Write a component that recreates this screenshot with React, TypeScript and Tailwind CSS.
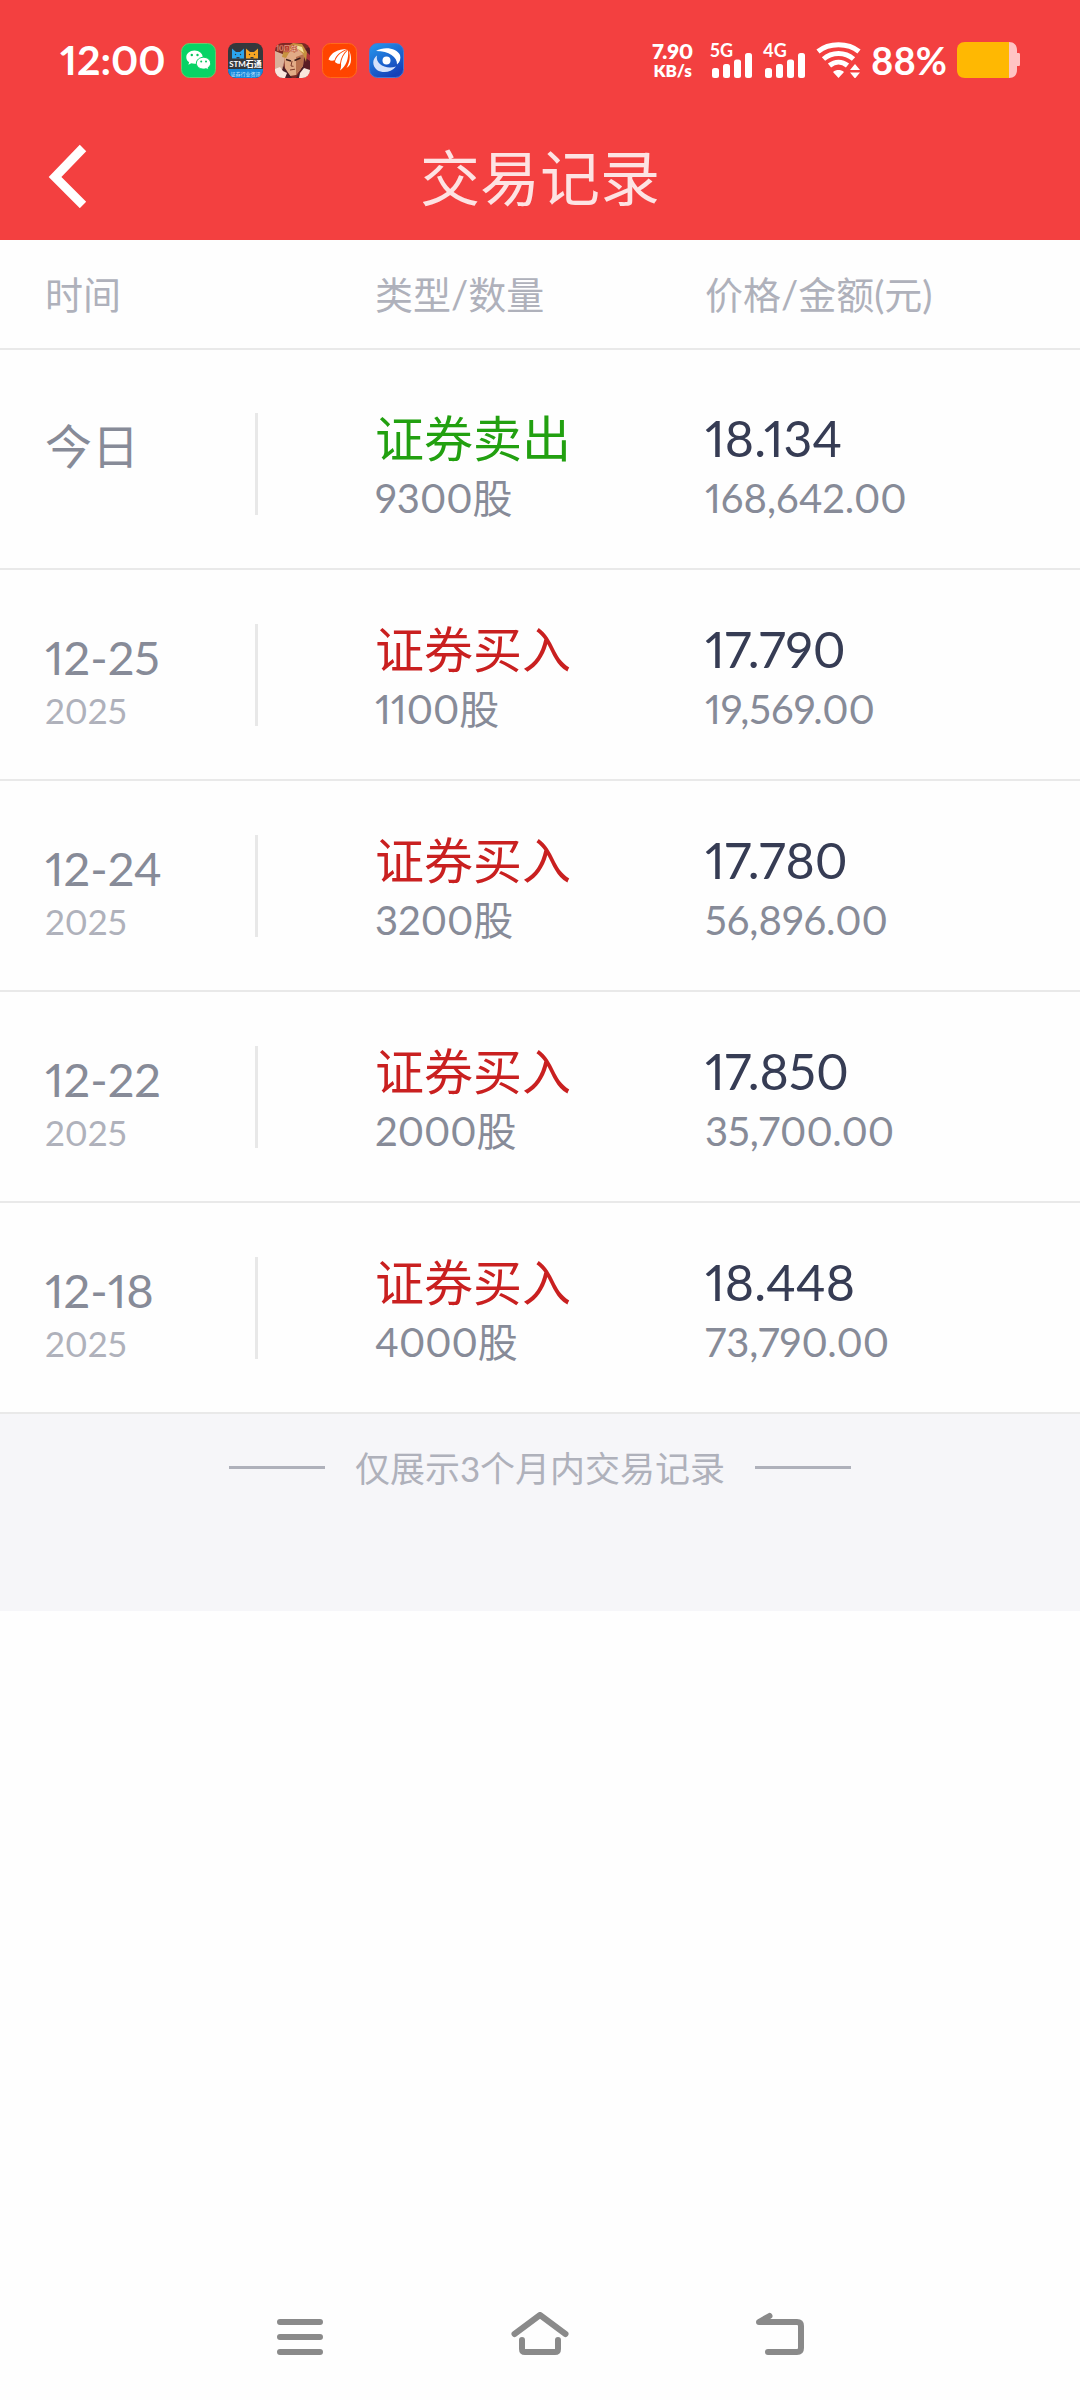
import React from "react";
import clsx from "clsx";

type Trade = {
    date: string;
    year?: string;
    side: "buy" | "sell";
    count: string;
    price: string;
    amount: string;
};

const trades: Trade[] = [
    { date: "今日", side: "sell", count: "9300股", price: "18.134", amount: "168,642.00" },
    { date: "12-25", year: "2025", side: "buy", count: "1100股", price: "17.790", amount: "19,569.00" },
    { date: "12-24", year: "2025", side: "buy", count: "3200股", price: "17.780", amount: "56,896.00" },
    { date: "12-22", year: "2025", side: "buy", count: "2000股", price: "17.850", amount: "35,700.00" },
    { date: "12-18", year: "2025", side: "buy", count: "4000股", price: "18.448", amount: "73,790.00" },
];

const WeChatIcon = () => (
    <svg viewBox="0 0 35 35" className="size-[35px]" aria-hidden="true">
        <rect x="0.5" y="0.5" width="34" height="34" rx="8" fill="#07d365" stroke="#6fc56a" />
        <path d="M13.5 7.5c-4.7 0-8.2 3-8.2 6.7 0 2.1 1.1 3.9 2.8 5.1l-.7 2.5 2.9-1.5c1 .3 2 .5 3.2.5 4.7 0 8.2-2.9 8.2-6.6s-3.5-6.7-8.2-6.7z" fill="#fff" />
        <path d="M22.5 14.3c-4 0-7.1 2.6-7.1 5.9s3.1 5.9 7.1 5.9c.9 0 1.8-.1 2.6-.4l2.5 1.3-.6-2.2c1.6-1.1 2.6-2.7 2.6-4.6 0-3.3-3.1-5.9-7.1-5.9z" fill="#fff" stroke="#07d365" strokeWidth="1" />
        <g fill="#07c45e">
            <circle cx="10.8" cy="12" r="1.2" />
            <circle cx="16.5" cy="12" r="1.2" />
            <circle cx="20.2" cy="18.5" r="1" />
            <circle cx="25" cy="18.5" r="1" />
        </g>
    </svg>
);

const StmIcon = () => (
    <svg viewBox="0 0 35 35" className="size-[35px]" aria-hidden="true">
        <defs>
            <clipPath id="stm-clip">
                <rect width="35" height="35" rx="8" />
            </clipPath>
        </defs>
        <g clipPath="url(#stm-clip)">
            <rect width="35" height="35" fill="#35383c" />
            <rect y="26" width="35" height="9" fill="#1687dc" />
            <path d="M4 5.5l4 3.5h4l4-3.5v10H4z" fill="#2aa5ee" />
            <path d="M18 5.5l4 3.5h4l4-3.5v10H18z" fill="#f7a623" />
            <path d="M8.5 15.5V14h3v1.5zM22.5 15.5V14h3v1.5z" fill="#35383c" />
            <g fill="#35383c">
                <circle cx="7.5" cy="11.5" r="0.7" />
                <circle cx="12.5" cy="11.5" r="0.7" />
                <circle cx="21.5" cy="11.5" r="0.7" />
                <circle cx="26.5" cy="11.5" r="0.7" />
            </g>
            <text x="17.5" y="24" textAnchor="middle" fontSize="8" fontWeight="700" fill="#fff">STM石通</text>
            <text x="17.5" y="32.5" textAnchor="middle" fontSize="5" fill="#d9f0ff">证券行业资讯</text>
        </g>
    </svg>
);

const GameIcon = () => (
    <svg viewBox="0 0 35 35" className="size-[35px]" aria-hidden="true">
        <defs>
            <clipPath id="game-clip">
                <rect width="35" height="35" rx="8" />
            </clipPath>
        </defs>
        <g clipPath="url(#game-clip)">
            <rect width="35" height="35" fill="#7a2a25" />
            <path d="M0 8l10 4-2 14-8 4z" fill="#d9b09a" />
            <path d="M25 8l10-4v22l-9 2z" fill="#5a1c25" />
            <path d="M28 6l7 6v6l-6-4z" fill="#b0323a" />
            <path d="M9 13l3-5 10-4 7 7-1 12-7 9-6 1-5-8z" fill="#e2ab86" />
            <path d="M21 14l8-3-1 12-7 9z" fill="#b9714f" />
            <path d="M7 14l2-8 9-6 9 1 5 8-1 10-3-8-5-5-8 2-4 7z" fill="#c7923f" />
            <path d="M13 8l7-6 7 2 2 6-6-4-7 2z" fill="#f7e2a0" />
            <path d="M11 16.5l5 1.5M19.5 17.5l6-2.5" stroke="#3b1d1a" strokeWidth="1.5" />
            <path d="M17 18l-1 5 2.5.3M15 27l5-.8" stroke="#7d3c2c" strokeWidth="1" fill="none" />
            <path d="M8 23l5 7 4 5H6zM29 22l-5 8-3 5h9z" fill="#47202a" />
            <path d="M0 26l5-2 3 4 4 2-2 5H0zM25 30l4-5 6 2v8H24z" fill="#f9e6de" />
            <text x="1" y="8" fontSize="7" fontWeight="900" fill="#fff0cf" stroke="#b32d20" strokeWidth="0.5">10周年</text>
        </g>
    </svg>
);

const EastMoneyIcon = () => (
    <svg viewBox="0 0 35 35" className="size-[35px]" aria-hidden="true">
        <rect x="0.5" y="0.5" width="34" height="34" rx="8" fill="#ff4400" stroke="#ff6a1c" />
        <g fill="#fff">
            <path d="M25 6C16 6 9 9.5 6.5 16.5c2 1.5 4 1.5 6 .8C14 12.5 18 8.5 25 6z" />
            <path d="M25.5 6.5c-7 3-11.5 7-12.5 12.5 1.5 1.5 3 2 5 1.7C18.5 15 21 10.5 25.5 6.5z" />
            <path d="M26 7c-4.5 4.5-6.5 8.5-7 13.5.3 2.5 0 4.5-1 7C24 23 27 16 26 7z" />
            <path d="M27 7.5c1.5 6.5.8 12-2.5 17.5 3-1.5 4.5-4.5 4.5-8.5 0-3.5-.5-6.5-2-9z" />
        </g>
    </svg>
);

const EyeIcon = () => (
    <svg viewBox="0 0 35 35" className="size-[35px]" aria-hidden="true">
        <defs>
            <linearGradient id="eye-bg" x1="0" y1="0" x2="0.6" y2="1">
                <stop offset="0" stopColor="#2598ee" />
                <stop offset="1" stopColor="#1641b8" />
            </linearGradient>
        </defs>
        <rect x="0.5" y="0.5" width="34" height="34" rx="8" fill="url(#eye-bg)" stroke="#4c77cf" />
        <path d="M7 8C15 3 28 5 31 12c1 3.5 0 7-3 9.5C28.500 14 20 8 7 8z" fill="#fff" />
        <path d="M8 12.500C3 16 3 23 8 27c6 3.500 14 2.500 19-3.500C17 27 6 21 8 12.500z" fill="#d5e2fb" />
        <circle cx="17.5" cy="17.5" r="4" fill="#fff" />
    </svg>
);

const Signal = ({ label }: { label: string }) => (
    <div className="flex w-[42px] flex-col">
        <span className="text-[18px] leading-[16px] font-bold">{label}</span>
        <svg viewBox="0 0 42 25" className="-mt-[5px] h-[25px] w-[42px]" fill="#fff" aria-hidden="true">
            <rect x="2" y="15" width="7" height="10" rx="2.5" />
            <rect x="13" y="11" width="7" height="14" rx="2.5" />
            <rect x="24" y="6.5" width="7" height="18.5" rx="2.5" />
            <rect x="35" y="0" width="7" height="25" rx="2.5" />
        </svg>
    </div>
);

const StatusBar = () => (
    <div className="flex h-[120px] items-center justify-between px-[60px] text-white">
        <div className="flex items-center gap-[12px]">
            <span className="mr-[3px] text-[41px] leading-[48px] font-bold">12:00</span>
            <WeChatIcon />
            <StmIcon />
            <GameIcon />
            <EastMoneyIcon />
            <EyeIcon />
        </div>
        <div className="flex items-center">
            <div className="mr-[17px] flex flex-col items-center font-extrabold">
                <span className="text-[21px] leading-[21px]">7.90</span>
                <span className="text-[17px] leading-[19px]">KB/s</span>
            </div>
            <div className="mr-[11px] flex gap-[11px]">
                <Signal label="5G" />
                <Signal label="4G" />
            </div>
            <svg viewBox="0 0 46 36" className="mr-[9px] h-[36px] w-[46px]" aria-hidden="true">
                <g fill="none" stroke="#fff" strokeWidth="5">
                    <path d="M2 9.5C13 .5 32 .5 43 9.5" />
                    <path d="M7.5 17C16 9.5 29 9.5 37.5 17" />
                    <path d="M13.5 23.5c5.5-4.5 12.5-4.5 18 0" />
                </g>
                <path d="M17 30c3.5-2.6 7.5-2.6 11 0l-5.5 6z" fill="#fff" />
                <path d="M34 28l5-6 5 6zM34 30.5h10l-5 6z" fill="#fff" />
            </svg>
            <span className="mr-[10px] text-[38px] leading-[44px] font-bold">88%</span>
            <svg viewBox="0 0 63 36" className="h-[36px] w-[63px]" aria-hidden="true">
                <path d="M52 0c5 0 8 3 8 8v3h1.5c1 0 1.5.5 1.5 1.5v10c0 1-.5 1.5-1.5 1.5H60v4c0 5-3 8-8 8z" fill="#ffc4c4" />
                <path d="M8 0h44v36H8c-5 0-8-3-8-8V8c0-5 3-8 8-8z" fill="#ffb802" />
            </svg>
        </div>
    </div>
);

const TradeRow = ({ trade }: { trade: Trade }) => (
    <tr className="grid grid-cols-3 border-b-2 border-[#e9e9e9] px-[45px] pt-[49px] pb-[40px]">
        <td className="flex items-start pr-[117px]">
            <div className="flex-1 pt-[8px]">
                <div className="text-[47px] leading-[60px] text-[#878b98]">{trade.date}</div>
                {trade.year && <div className="text-[35px] leading-[46px] text-[#afb1bb]">{trade.year}</div>}
            </div>
            <span className="mt-[5px] h-[102px] w-[3px] bg-[#e8e8e8]" />
        </td>
        <td>
            <div className={clsx("text-[49px] leading-[60px]", trade.side === "buy" ? "text-[#c92020]" : "text-[#22a010]")}>
                {trade.side === "buy" ? "证券买入" : "证券卖出"}
            </div>
            <div className="text-[40px] leading-[60px] text-[#878b98]">{trade.count}</div>
        </td>
        <td>
            <div className="text-[50px] leading-[60px] text-[#363c54]">{trade.price}</div>
            <div className="text-[40px] leading-[60px] text-[#878b98]">{trade.amount}</div>
        </td>
    </tr>
);

const NavBar = () => (
    <nav className="mt-auto flex h-[128px] justify-center">
        <button type="button" aria-label="最近任务" className="flex w-[240px] items-center justify-center">
            <svg viewBox="0 0 60 48" className="h-[48px] w-[60px]" fill="none" stroke="#8a8a8a" strokeWidth="6" strokeLinecap="round">
                <path d="M10 10h40M10 25h40M10 40h40" />
            </svg>
        </button>
        <button type="button" aria-label="主页" className="flex w-[240px] items-center justify-center">
            <svg viewBox="0 0 60 48" className="h-[48px] w-[60px]" fill="none" stroke="#8a8a8a" strokeWidth="6" strokeLinecap="round" strokeLinejoin="round">
                <path d="M4.5 22L30 3l25.5 19" />
                <path d="M12 28v9q0 3 3 3h30q3 0 3-3v-9" />
            </svg>
        </button>
        <button type="button" aria-label="返回" className="flex w-[240px] items-center justify-center">
            <svg viewBox="0 0 60 48" className="h-[48px] w-[60px]" fill="none" stroke="#8a8a8a" strokeWidth="6" strokeLinecap="round" strokeLinejoin="round">
                <path d="M18 40h29q4 0 4-4V14q0-4-4-4H9l10.5-6" />
            </svg>
        </button>
    </nav>
);

export default function App() {
    return (
        <div className="flex min-h-screen flex-col bg-[#fefefe] font-[Lato,'Noto_Sans_CJK_SC',sans-serif] proportional-nums">
            <header className="bg-[#f34040]">
                <StatusBar />
                <div className="grid h-[120px] grid-cols-3 items-center pb-2">
                    <button type="button" aria-label="返回" className="ml-[45px] flex size-[64px] items-center">
                        <svg viewBox="0 0 46 64" className="h-[64px] w-[46px]" fill="none" stroke="#fff" strokeWidth="9">
                            <path d="M38 4L10 33l28 28" />
                        </svg>
                    </button>
                    <h1 className="pt-1 text-center text-[60px] leading-[72px] whitespace-nowrap text-[#fde3e3]">交易记录</h1>
                </div>
            </header>

            <table className="block w-full text-left">
                <thead className="block border-b-2 border-[#e9e9e9]">
                    <tr className="grid h-[108px] grid-cols-3 items-center px-[45px] text-[38px] leading-[44px] text-[#afb1bb]">
                        <th className="font-normal">时间</th>
                        <th className="font-normal">类型/数量</th>
                        <th className="font-normal">价格/金额(元)</th>
                    </tr>
                </thead>
                <tbody className="block pt-[9px]">
                    {trades.map((trade) => (
                        <TradeRow key={trade.date} trade={trade} />
                    ))}
                </tbody>
            </table>

            <div className="flex items-start justify-center gap-[30px] bg-[#f6f6f9] pt-[29px] pb-[118px]">
                <span className="mt-[23px] h-[3px] w-[96px] bg-[#afb1bb]" />
                <p className="text-[35px] leading-[50px] text-[#afb1bb]">仅展示3个月内交易记录</p>
                <span className="mt-[23px] h-[3px] w-[96px] bg-[#afb1bb]" />
            </div>

            <NavBar />
        </div>
    );
}
